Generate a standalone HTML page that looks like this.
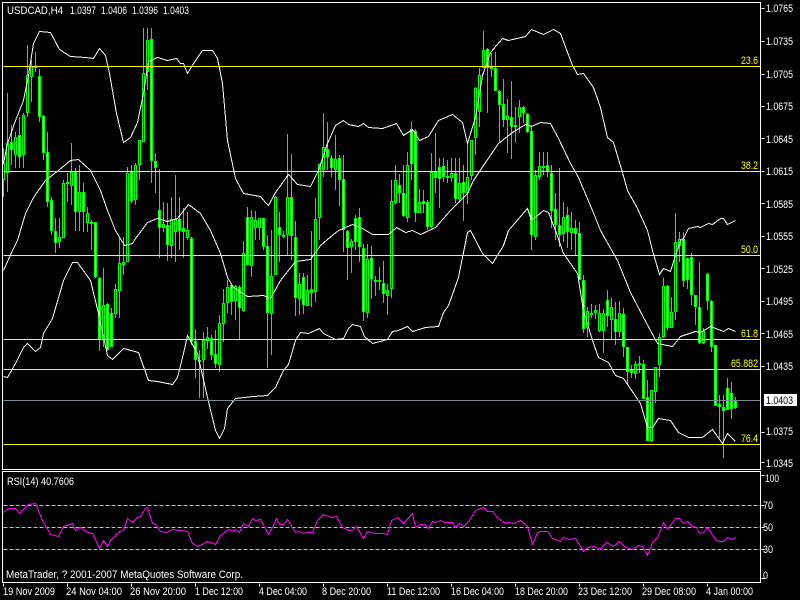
<!DOCTYPE html>
<html><head><meta charset="utf-8"><title>USDCAD,H4</title>
<style>
html,body{margin:0;padding:0;background:#000;width:800px;height:600px;overflow:hidden}
svg{display:block}
text{font-family:"Liberation Sans",sans-serif;font-size:11px;fill:#fff}
text.y{fill:#ff0}
path,polyline,line{shape-rendering:crispEdges;fill:none}
</style></head><body>
<svg width="800" height="600" viewBox="0 0 800 600" xmlns="http://www.w3.org/2000/svg">
<rect width="800" height="600" fill="#000"/>
<g transform="translate(.5,0)">
<path stroke="#00ff00" stroke-width="1" d="M3 148V197M7 93V192M11 125V165M15 132V168M19 117V168M23 113V168M27 45V117M31 60V102M35 52V72M39 69V122M43 115V160M47 132V207M51 197V235M55 218V253M59 218V248M63 180V238M67 173V202M71 143V205M75 168V231M79 165V231M83 183V232M87 207V232M91 220V250M95 222V278M99 277V351M103 268V347M107 303V351M111 308V347M115 284V318M119 237V318M123 237V275M127 167V262M131 165V203M135 163V205M139 140V180M143 28V142M147 28V90M151 28V183M155 153V193M159 169V258M163 202V232M167 203V261M171 197V258M175 175V262M179 197V250M183 208V258M187 212V240M191 237V345M195 329V378M199 350V398M203 332V398M207 327V349M211 335V360M215 330V368M219 315V372M223 289V342M227 280V313M231 285V315M235 285V320M239 285V339M243 241V312M247 207V265M251 210V277M255 211V240M259 218V240M263 218V250M267 235V368M271 230V355M275 196V275M279 212V262M283 231V238M287 134V255M291 154V260M295 221V316M299 273V315M303 273V314M307 275V306M311 231V307M315 198V302M319 164V240M323 113V177M327 122V170M331 155V177M335 135V190M339 155V206M343 155V252M347 230V280M351 239V273M355 215V250M359 208V262M363 244V321M367 244V318M371 246V299M375 276V296M379 267V290M383 261V303M387 284V315M391 180V298M395 165V204M399 174V203M403 165V217M407 152V222M411 121V180M415 129V222M419 189V213M423 190V213M427 200V230M431 153V228M435 133V193M439 158V208M443 158V182M447 160V183M451 158V182M455 158V203M459 158V203M463 165V221M467 143V204M471 140V180M475 87V155M479 68V127M483 31V68M487 48V113M491 53V77M495 52V91M499 90V142M503 79V127M507 99V153M511 81V159M515 107V143M519 100V133M523 106V123M527 113V133M531 125V250M535 170V240M539 152V180M543 152V175M547 152V177M551 165V228M555 193V240M559 168V247M563 202V242M567 207V248M571 212V250M575 220V255M579 222V280M583 275V333M587 307V337M591 304V318M595 305V319M599 304V332M603 309V353M607 290V327M611 298V340M615 302V345M619 301V337M623 308V357M627 347V385M631 365V378M635 361V379M639 356V373M643 360V399M647 380V441M651 390V442M655 367V403M659 333V377M663 278V338M667 285V330M671 297V328M675 213V320M679 232V262M683 232V287M687 258V289M691 253V305M695 295V325M699 262V344M703 328V344M707 273V310M711 300V352M715 345V406M719 395V438M723 395V458M727 378V410M731 382V419M735 397V409"/>
<path stroke="#00ff00" stroke-width="3" d="M3 163V180M7 143V173M11 142V150M15 137V155M19 135V157M23 115V155M27 75V113M31 66V77M35 66V68M39 76V117M43 116V153M47 152V202M51 200V231M55 231V243M59 237V242M63 183V238M67 182V184M71 172V186M75 172V212M79 192V212M83 192V212M87 213V223M91 222V224M95 222V277M99 278V339M103 305V340M107 304V350M111 313V347M115 289V314M119 263V291M123 262V265M127 173V262M131 172V201M135 165V200M139 140V165M143 73V142M147 40V72M151 39V161M155 161V168M159 210V228M163 224V228M167 225V245M171 219V246M175 219V232M179 219V231M183 228V232M187 230V238M191 238V342M195 341V360M199 360V362M203 340V360M207 337V341M211 338V355M215 354V364M219 323V365M223 303V324M227 287V303M231 285V302M235 286V301M239 287V308M243 253V311M247 217V265M251 217V266M255 220V228M259 218V228M263 218V247M267 246V313M271 276V314M275 197V275M279 227V235M283 235V237M287 197V235M291 197V236M295 237V298M299 284V299M303 277V305M307 290V306M311 289V293M315 219V292M319 164V218M323 147V170M327 149V157M331 158V168M335 159V170M339 158V180M343 179V230M347 231V248M351 241V247M355 218V242M359 217V247M363 248V312M367 259V313M371 258V279M375 280V282M379 280V282M383 283V294M387 290V296M391 201V289M395 180V203M399 185V193M403 193V216M407 165V218M411 129V164M415 131V213M419 202V213M423 201V204M427 202V227M431 172V227M435 172V178M439 167V179M443 166V177M447 176V178M451 173V178M455 173V199M459 183V199M463 182V193M467 177V193M471 140V176M475 88V138M479 75V112M483 50V68M487 49V68M491 67V69M495 68V91M499 91V105M503 104V120M507 116V120M511 117V127M515 125V127M519 107V117M523 107V113M527 114V132M531 131V235M535 175V237M539 166V177M543 166V168M547 165V172M551 173V211M555 209V225M559 225V235M563 217V234M567 215V232M571 228V233M575 228V234M579 233V280M583 280V329M587 311V328M591 313V315M595 310V313M599 313V331M603 313V331M607 300V316M611 307V320M615 319V332M619 313V332M623 314V347M627 347V372M631 370V373M635 364V374M639 363V365M643 364V399M647 397V441M651 390V441M655 367V392M659 337V365M663 286V337M667 286V328M671 312V328M675 242V312M679 239V246M683 239V281M687 258V280M691 257V295M695 295V307M699 307V343M703 331V343M707 274V301M711 301V347M715 345V406M719 404V407M723 407V411M727 388V410M731 393V409M735 400V408"/>
<path stroke="#000" stroke-width="1" d="M3 164V179M7 144V172M15 138V154M23 116V154M27 76V112M31 67V76M59 238V241M63 184V237M71 173V185M79 193V211M87 214V222M103 306V339M115 290V313M119 264V290M123 263V264M127 174V261M135 166V199M139 141V164M143 74V141M147 41V71M163 225V227M171 220V245M175 220V231M187 231V237M203 341V359M207 338V340M219 324V364M223 304V323M227 288V302M235 287V300M243 254V310M251 218V265M255 221V227M259 219V227M271 277V313M275 198V274M287 198V234M299 285V298M307 291V305M315 220V291M319 165V217M323 148V169M335 160V169M351 242V246M367 260V312M387 291V295M391 202V288M395 181V202M407 166V217M419 203V212M431 173V226M451 174V177M459 184V198M467 178V192M471 141V175M475 89V137M479 76V111M483 51V67M507 117V119M519 108V116M535 176V236M539 167V176M563 218V233M571 229V232M587 312V327M595 311V312M599 314V330M603 314V330M611 308V319M619 314V331M635 365V373M651 391V440M655 368V391M659 338V364M663 287V336M671 313V327M675 243V311M679 240V245M703 332V342"/>
<path stroke="#fff" stroke-width="1" d="M11 143V149M19 136V156M39 77V116M43 117V152M47 153V201M51 201V230M55 232V242M75 173V211M83 193V211M95 223V276M99 279V338M107 305V349M111 314V346M131 173V200M151 40V160M155 162V167M159 211V227M167 226V244M179 220V230M191 239V341M195 342V359M211 339V354M215 355V363M231 286V301M239 288V307M247 218V264M263 219V246M267 247V312M279 228V234M291 198V235M295 238V297M303 278V304M327 150V156M331 159V167M339 159V179M343 180V229M347 232V247M355 219V241M359 218V246M363 249V311M371 259V278M383 284V293M399 186V192M403 194V215M411 130V163M415 132V212M423 202V203M427 203V226M435 173V177M439 168V178M443 167V176M455 174V198M463 183V192M487 50V67M495 69V90M499 92V104M503 105V119M511 118V126M523 108V112M527 115V131M531 132V234M547 166V171M551 174V210M555 210V224M559 226V234M567 216V231M575 229V233M579 234V279M583 281V328M607 301V315M615 320V331M623 315V346M627 348V371M631 371V372M643 365V398M647 398V440M667 287V327M683 240V280M687 259V279M691 258V294M695 296V306M699 308V342M707 275V300M711 302V346M715 346V405M719 405V406M723 408V410M727 389V409M731 394V408M735 401V407"/>
</g>
<g transform="translate(.5,.5)">
<polyline stroke="#fff" points="3,163 7,143 15,120 23,100 28,75 33,43 39,31 50,32 59,49 70,56 85,57 93,58 99,48 105,55 109,73 116,113 123,142 130,137 137,122 143,93 148,61 157,57 167,60 176,58 180,63 183,63 187,73 193,63 202,50 212,50 217,58 222,83 227,140 235,178 243,193 260,196 265,202 268,205 275,192 288,174 297,184 310,186 318,170 327,143 335,125 343,120 348,124 358,126 363,123 368,127 382,128 396,123 403,135 412,129 419,140 428,136 438,120 452,114 462,122 467,143 475,117 482,75 490,52 502,38 508,40 525,36 531,29 543,34 553,29 560,33 572,65 577,74 583,73 593,87 600,107 607,137 613,142 622,172 627,190 637,208 647,230 652,250 659,274 663,268 670,271 675,255 680,240 683,238 688,228 697,226 700,227 708,223 712,224 720,218 723,218 727,224 735,220"/>
<polyline stroke="#fff" points="3,270 12,250 17,240 25,213 33,197 45,180 58,170 70,160 78,159 90,170 100,190 107,210 115,230 124,245 132,243 135,238 147,222 157,218 167,221 177,218 188,204 200,213 210,230 220,253 227,277 233,287 247,296 263,295 270,298 280,280 295,261 310,259 320,245 327,239 338,230 352,224 362,228 372,234 388,234 396,227 405,232 412,230 420,234 435,227 450,210 467,193 473,180 485,162 498,143 512,132 525,124 531,126 540,122 550,123 558,138 570,163 578,177 592,210 600,230 617,260 630,292 643,317 657,343 672,346 680,336 695,331 700,332 710,326 723,331 728,328 735,331"/>
<polyline stroke="#fff" points="3,376 7,377 15,363 23,347 27,343 35,351 40,347 43,333 52,318 63,280 72,262 77,262 90,280 98,313 107,355 112,359 123,348 138,352 148,380 157,381 172,384 177,377 183,353 187,335 197,353 207,397 215,430 219,438 224,428 227,408 235,398 253,396 267,395 275,387 283,370 288,364 295,340 300,332 308,333 319,328 323,333 335,339 343,338 348,328 352,324 360,326 364,336 372,343 387,339 392,331 398,330 407,326 412,331 425,327 438,326 443,312 448,305 458,277 467,232 470,230 482,253 492,263 503,245 508,230 527,208 531,220 543,210 548,212 555,230 563,253 577,273 583,310 592,340 598,357 608,362 615,375 623,378 640,403 647,427 652,427 658,418 670,420 678,432 688,437 702,437 712,429 722,443 727,433 735,441"/>
<path stroke="#ffff00" d="M3 66H760M3 171H760M3 255H760M3 339H760M3 369H760M3 444H760"/>
<path stroke="#778899" d="M3 400H760"/>
<path stroke="#c0c0c0" stroke-dasharray="4 2" d="M3 505H760M3 527H760M3 549H760"/>
<polyline stroke="#ff00ff" points="3,512 8,508 15,508 19,513 28,504 35,503 42,520 50,534 58,536 63,526 72,523 75,530 80,527 87,532 92,533 99,548 103,540 107,546 110,540 119,531 123,530 127,518 132,522 137,517 140,516 145,508 147,507 152,523 155,524 160,531 166,532 172,529 187,531 192,543 197,546 200,545 207,541 215,544 220,535 228,529 233,531 235,529 239,532 243,523 248,526 252,518 255,520 260,519 268,534 272,527 276,518 279,524 283,524 287,519 295,532 299,531 303,533 307,532 312,532 317,520 323,514 328,516 332,517 336,516 342,527 348,530 351,530 356,526 363,538 367,531 374,533 382,533 387,534 391,520 397,517 403,523 412,513 415,527 420,524 424,524 428,528 432,521 435,522 440,520 444,522 452,522 455,527 459,523 463,526 469,520 475,510 483,507 487,511 492,511 496,516 503,522 508,522 513,523 520,520 527,526 532,544 537,532 540,531 547,531 552,538 560,541 563,537 568,539 575,538 583,551 587,547 594,546 599,549 606,542 613,546 619,541 625,547 632,549 638,545 642,546 647,555 652,542 657,537 663,522 667,529 675,518 679,518 683,523 687,521 692,526 696,527 699,533 703,532 707,527 715,539 718,541 723,541 727,537 731,539 735,537"/>
<path stroke="#fff" d="M2 2H760V469H2ZM2 471H760V582H2Z"/>
<path stroke="#fff" d="M761 8H764M761 41H764M761 74H764M761 106H764M761 138H764M761 171H764M761 203H764M761 236H764M761 268H764M761 301H764M761 333H764M761 366H764M761 432H764M761 462H764M761 475H764M761 505H764M761 527H764M761 549H764M761 578H764M3 583V586M67 583V586M131 583V586M195 583V586M259 583V586M323 583V586M387 583V586M451 583V586M515 583V586M579 583V586M643 583V586M707 583V586"/>
</g>
<rect x="764" y="394" width="33" height="12" fill="#fff"/>
<g>
<text x="7" y="14" textLength="56" lengthAdjust="spacingAndGlyphs">USDCAD,H4</text>
<text x="70" y="14" textLength="26" lengthAdjust="spacingAndGlyphs">1.0397</text>
<text x="101" y="14" textLength="26" lengthAdjust="spacingAndGlyphs">1.0406</text>
<text x="132" y="14" textLength="26" lengthAdjust="spacingAndGlyphs">1.0396</text>
<text x="163" y="14" textLength="26" lengthAdjust="spacingAndGlyphs">1.0403</text>
<text x="766" y="12" textLength="27" lengthAdjust="spacingAndGlyphs">1.0765</text>
<text x="766" y="45" textLength="27" lengthAdjust="spacingAndGlyphs">1.0735</text>
<text x="766" y="78" textLength="27" lengthAdjust="spacingAndGlyphs">1.0705</text>
<text x="766" y="110" textLength="27" lengthAdjust="spacingAndGlyphs">1.0675</text>
<text x="766" y="143" textLength="27" lengthAdjust="spacingAndGlyphs">1.0645</text>
<text x="766" y="175" textLength="27" lengthAdjust="spacingAndGlyphs">1.0615</text>
<text x="766" y="208" textLength="27" lengthAdjust="spacingAndGlyphs">1.0585</text>
<text x="766" y="240" textLength="27" lengthAdjust="spacingAndGlyphs">1.0555</text>
<text x="766" y="273" textLength="27" lengthAdjust="spacingAndGlyphs">1.0525</text>
<text x="766" y="305" textLength="27" lengthAdjust="spacingAndGlyphs">1.0495</text>
<text x="766" y="338" textLength="27" lengthAdjust="spacingAndGlyphs">1.0465</text>
<text x="766" y="370" textLength="27" lengthAdjust="spacingAndGlyphs">1.0435</text>
<text x="766" y="404" textLength="27" lengthAdjust="spacingAndGlyphs" style="fill:#000">1.0403</text>
<text x="766" y="435" textLength="27" lengthAdjust="spacingAndGlyphs">1.0375</text>
<text x="766" y="467" textLength="27" lengthAdjust="spacingAndGlyphs">1.0345</text>
<text class="y" x="741" y="64" textLength="17" lengthAdjust="spacingAndGlyphs">23.6</text>
<text class="y" x="741" y="169" textLength="17" lengthAdjust="spacingAndGlyphs">38.2</text>
<text class="y" x="741" y="253" textLength="17" lengthAdjust="spacingAndGlyphs">50.0</text>
<text class="y" x="741" y="337" textLength="17" lengthAdjust="spacingAndGlyphs">61.8</text>
<text class="y" x="731" y="367" textLength="27" lengthAdjust="spacingAndGlyphs">65.882</text>
<text class="y" x="741" y="442" textLength="17" lengthAdjust="spacingAndGlyphs">76.4</text>
<text x="7" y="485" textLength="67" lengthAdjust="spacingAndGlyphs">RSI(14) 40.7606</text>
<text x="6" y="578" textLength="237" lengthAdjust="spacingAndGlyphs">MetaTrader, ? 2001-2007 MetaQuotes Software Corp.</text>
<text x="765" y="482" textLength="14" lengthAdjust="spacingAndGlyphs">100</text>
<text x="763" y="509" textLength="10" lengthAdjust="spacingAndGlyphs">70</text>
<text x="763" y="531" textLength="10" lengthAdjust="spacingAndGlyphs">50</text>
<text x="763" y="553" textLength="10" lengthAdjust="spacingAndGlyphs">30</text>
<text x="763" y="579" textLength="5" lengthAdjust="spacingAndGlyphs">0</text>
<text x="3" y="595" textLength="52" lengthAdjust="spacingAndGlyphs">19 Nov 2009</text>
<text x="66" y="595" textLength="56" lengthAdjust="spacingAndGlyphs">24 Nov 04:00</text>
<text x="130" y="595" textLength="56" lengthAdjust="spacingAndGlyphs">26 Nov 20:00</text>
<text x="195" y="595" textLength="48" lengthAdjust="spacingAndGlyphs">1 Dec 12:00</text>
<text x="259" y="595" textLength="48" lengthAdjust="spacingAndGlyphs">4 Dec 04:00</text>
<text x="322" y="595" textLength="49" lengthAdjust="spacingAndGlyphs">8 Dec 20:00</text>
<text x="387" y="595" textLength="53" lengthAdjust="spacingAndGlyphs">11 Dec 12:00</text>
<text x="451" y="595" textLength="53" lengthAdjust="spacingAndGlyphs">16 Dec 04:00</text>
<text x="515" y="595" textLength="53" lengthAdjust="spacingAndGlyphs">18 Dec 20:00</text>
<text x="578" y="595" textLength="54" lengthAdjust="spacingAndGlyphs">23 Dec 12:00</text>
<text x="642" y="595" textLength="54" lengthAdjust="spacingAndGlyphs">29 Dec 08:00</text>
<text x="706" y="595" textLength="47" lengthAdjust="spacingAndGlyphs">4 Jan 00:00</text>
</g>
</svg>
</body></html>
